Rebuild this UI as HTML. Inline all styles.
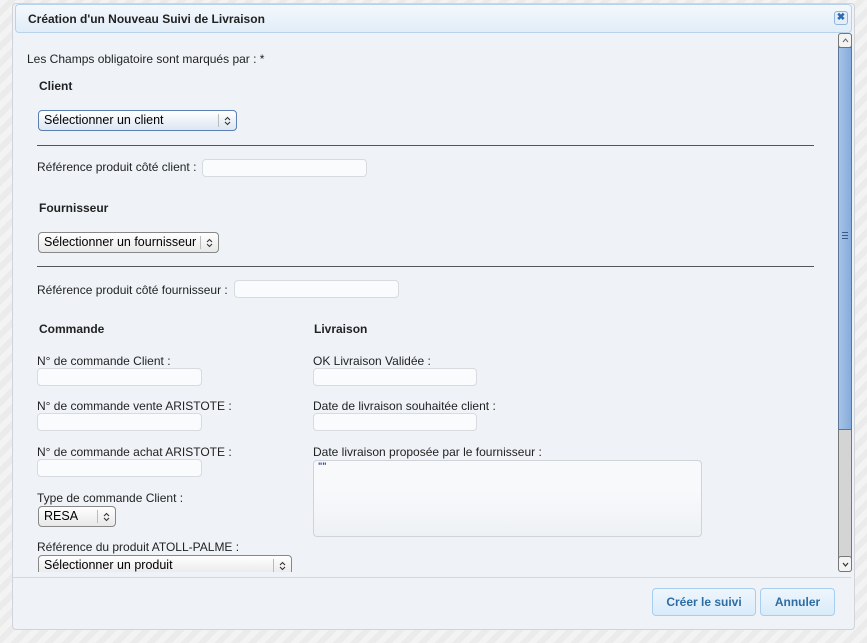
<!DOCTYPE html>
<html><head><meta charset="utf-8"><style>
*{box-sizing:border-box}
body{margin:0;width:867px;height:643px;overflow:hidden;font-family:"Liberation Sans",sans-serif;font-size:12px;color:#222;
background:repeating-linear-gradient(135deg,#f3f3f3 0 6px,#ebebeb 6px 12px);position:relative}
.a{position:absolute}
#dlg{left:12px;top:3px;width:843px;height:627px;background:#eff3f7;border:1px solid #d0d4d8;border-radius:4px}
#tb{left:15px;top:4px;width:837px;height:29px;background:linear-gradient(#f4f8fc,#e1edf8);border:1px solid #b7d3ec;border-radius:4px;font-weight:bold;font-size:12px;color:#222;padding:7px 0 0 12px}
.cl{left:834px;top:11px;width:14px;height:14px;border:1px solid #8fb6da;border-radius:3px;background:#e4eef8;color:#2b6cb0;font-size:10px;line-height:12px;text-align:center;font-weight:bold}
.h{font-weight:bold}
.in{height:18px;background:#fafbfc;border:1px solid #d7dbe0;border-radius:4px}
.sel{height:21px;background:linear-gradient(#fff,#e8e8e8);border:1px solid #888;border-radius:4px;padding:2px 0 0 5px;font-size:12.5px;color:#000}
.sel:after{content:"";position:absolute;right:17px;top:3px;height:13px;border-left:1px solid #bbb}
.sel svg{position:absolute;right:5px;top:5px}
.hr{height:1px;background:#555;left:37px;width:777px}
.btn{height:28px;border:1px solid #a9cdec;border-radius:4px;background:linear-gradient(#eef6fd,#d9ebf9);color:#2e6da4;font-weight:bold;font-size:12px;text-align:center;line-height:26px}
</style></head><body>
<div id="dlg" class="a"></div>
<div id="tb" class="a">Création d'un Nouveau Suivi de Livraison</div>
<div class="a cl">✖</div>
<div class="a" style="left:27px;top:52px">Les Champs obligatoire sont marqués par : *</div>
<div class="a h" style="left:39px;top:79px">Client</div>
<div class="a sel" style="left:38px;top:110px;width:199px;border-color:#5b7fb3;background:linear-gradient(#fff,#dce6f2)">Sélectionner un client<svg width="7" height="10"><path d="M1 4L3.5 1.5L6 4M1 6L3.5 8.5L6 6" fill="none" stroke="#333" stroke-width="1.1"/></svg></div>
<div class="a hr" style="top:145px"></div>
<div class="a" style="left:37px;top:160px">Référence produit côté client :</div>
<div class="a in" style="left:202px;top:159px;width:165px"></div>
<div class="a h" style="left:39px;top:201px">Fournisseur</div>
<div class="a sel" style="left:38px;top:232px;width:181px">Sélectionner un fournisseur<svg width="7" height="10"><path d="M1 4L3.5 1.5L6 4M1 6L3.5 8.5L6 6" fill="none" stroke="#333" stroke-width="1.1"/></svg></div>
<div class="a hr" style="top:266px"></div>
<div class="a" style="left:37px;top:283px">Référence produit côté fournisseur :</div>
<div class="a in" style="left:234px;top:280px;width:165px"></div>
<div class="a h" style="left:39px;top:322px">Commande</div>
<div class="a" style="left:37px;top:354px">N° de commande Client :</div>
<div class="a in" style="left:37px;top:368px;width:165px"></div>
<div class="a" style="left:37px;top:399px">N° de commande vente ARISTOTE :</div>
<div class="a in" style="left:37px;top:413px;width:165px"></div>
<div class="a" style="left:37px;top:445px">N° de commande achat ARISTOTE :</div>
<div class="a in" style="left:37px;top:459px;width:165px"></div>
<div class="a" style="left:37px;top:491px">Type de commande Client :</div>
<div class="a sel" style="left:38px;top:506px;width:78px">RESA<svg width="7" height="10"><path d="M1 4L3.5 1.5L6 4M1 6L3.5 8.5L6 6" fill="none" stroke="#333" stroke-width="1.1"/></svg></div>
<div class="a" style="left:37px;top:540px">Référence du produit ATOLL-PALME :</div>
<div class="a" style="left:37px;top:555px;width:256px;height:17px;overflow:hidden"><div class="a sel" style="left:1px;top:0;width:254px">Sélectionner un produit<svg width="7" height="10"><path d="M1 4L3.5 1.5L6 4M1 6L3.5 8.5L6 6" fill="none" stroke="#333" stroke-width="1.1"/></svg></div></div>
<div class="a h" style="left:314px;top:322px">Livraison</div>
<div class="a" style="left:313px;top:354px">OK Livraison Validée :</div>
<div class="a in" style="left:313px;top:368px;width:164px"></div>
<div class="a" style="left:313px;top:399px">Date de livraison souhaitée client :</div>
<div class="a in" style="left:313px;top:413px;width:164px"></div>
<div class="a" style="left:313px;top:445px">Date livraison proposée par le fournisseur :</div>
<div class="a" style="left:313px;top:460px;width:389px;height:77px;border:1px solid #d0d4d8;border-radius:4px;background:linear-gradient(#f8f9fb 40%,#eef1f4);font-size:9px;color:#2244aa;font-weight:bold;padding:0 4px">""</div>
<div class="a" style="left:838px;top:33px;width:14px;height:539px;background:#d4d4d4;border:1px solid #777;border-radius:3px"></div>
<div class="a" style="left:838px;top:33px;width:14px;height:15px;background:#f3f3f3;border:1px solid #777;border-radius:3px"><svg class="a" style="left:3px;top:4px" width="7" height="5"><path d="M1 4L3.5 1L6 4" fill="none" stroke="#666" stroke-width="1"/></svg></div>
<div class="a" style="left:838px;top:47px;width:14px;height:383px;background:linear-gradient(90deg,#a7c3e6,#85acdc);border:1px solid #5c7599"></div>
<div class="a" style="left:842px;top:232px;width:6px;height:7px;border-top:1px solid #3a5a88;border-bottom:1px solid #3a5a88"><div style="margin-top:2px;height:1px;background:#3a5a88"></div></div>
<div class="a" style="left:838px;top:556px;width:14px;height:16px;background:#f3f3f3;border:1px solid #777;border-radius:3px"><svg class="a" style="left:3px;top:5px" width="7" height="5"><path d="M1 1L3.5 4L6 1" fill="none" stroke="#333" stroke-width="1.2"/></svg></div>
<div class="a" style="left:13px;top:577px;width:838px;height:1px;background:#d3d8de"></div>
<div class="a btn" style="left:652px;top:588px;width:104px">Créer le suivi</div>
<div class="a btn" style="left:760px;top:588px;width:75px">Annuler</div>
</body></html>
